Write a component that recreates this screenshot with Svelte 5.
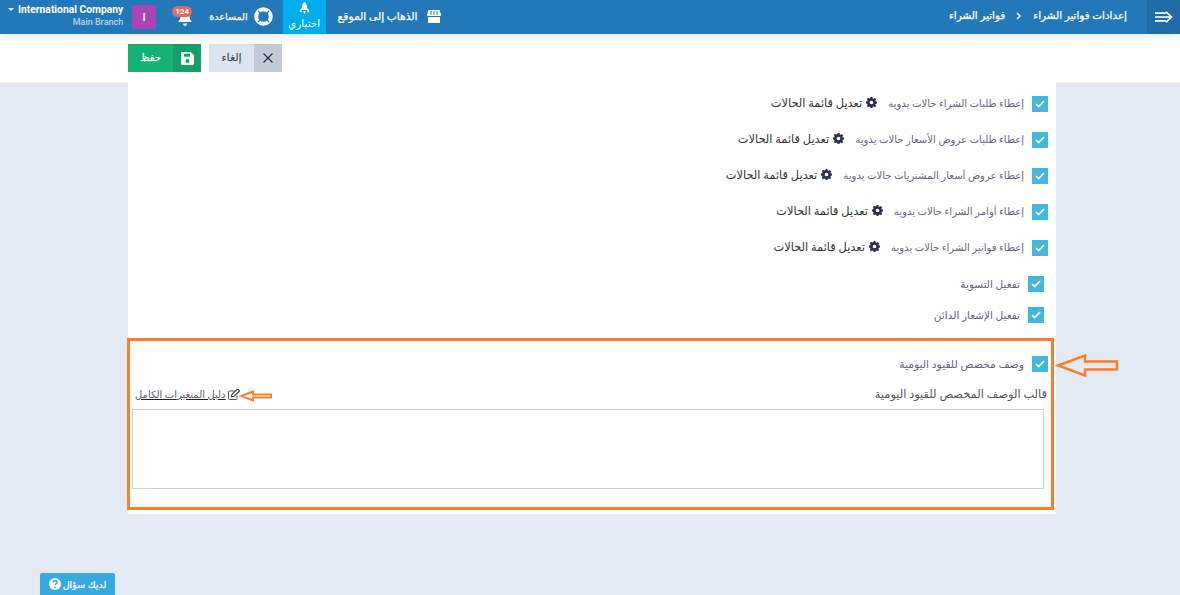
<script>
  const manual = [
    'إعطاء طلبات الشراء حالات يدوية',
    'إعطاء طلبات عروض الأسعار حالات يدوية',
    'إعطاء عروض أسعار المشتريات حالات يدوية',
    'إعطاء أوامر الشراء حالات يدوية',
    'إعطاء فواتير الشراء حالات يدوية'
  ];
</script>

{#snippet check()}
  <span class="check">
    <svg width="10" height="8" viewBox="0 0 10 8"><path d="M1 4l2.6 2.6L9 1.2" fill="none" stroke="#fff" stroke-width="1.7"/></svg>
  </span>
{/snippet}

<div class="page" dir="rtl">
  <header class="topbar">
    <button class="toggle" aria-label="menu">
      <svg width="18" height="12" viewBox="0 0 18 12"><path d="M0 2.2h11M0 6h15M0 9.8h11M11 .8L16.5 6 11 11.200" fill="none" stroke="#fff" stroke-width="1.7"/></svg>
    </button>
    <nav class="crumbs">
      <span>إعدادات فواتير الشراء</span>
      <svg width="6" height="8" viewBox="0 0 6 8"><path d="M1 1l3 3-3 3" fill="none" stroke="#fff" stroke-width="1.500"/></svg>
      <span>فواتير الشراء</span>
    </nav>
    <div class="spacer"></div>
    <a class="tool site">
      <svg width="14" height="13" viewBox="0 0 14 13"><path d="M1.500 0h11L14 4.500c0 1-.7 1.500-1.400 1.500H1.400C.7 6 0 5.500 0 4.500zM1 7h12v6H1z" fill="#fff"/><path d="M4 1v4M7 1v4M10 1v4" stroke="#2378b9"/></svg>
      <span>الذهاب إلى الموقع</span>
    </a>
    <a class="trial">
      <svg width="11" height="13" viewBox="0 0 12 14"><path d="M6 0c2 1.500 2.800 3.500 2.800 6v2.500H3.200V6C3.200 3.500 4 1.500 6 0zM3 6L.8 9.500V11h2.200zM9 6l2.200 3.500V11H9zM4.500 10h3L6 13z" fill="#fff"/></svg>
      <span>اختباري</span>
    </a>
    <a class="tool help">
      <svg width="19" height="19" viewBox="0 0 19 19"><circle cx="9.500" cy="9.500" r="7.300" fill="none" stroke="#fff" stroke-width="4"/><path d="M4 4l3 3M15 4l-3 3M4 15l3-3M15 15l-3-3" stroke="#2378b9" stroke-width="1.300"/></svg>
      <span>المساعدة</span>
    </a>
    <div class="bell">
      <svg width="16" height="17" viewBox="0 0 16 17"><path d="M8 1c3 0 4.500 2.200 4.500 5 0 3 1 4.500 2.500 6H1c1.500-1.500 2.500-3 2.500-6C3.500 3.200 5 1 8 1zM6 13.500h4C10 15 9 16 8 16s-2-1-2-2.500z" fill="#fff"/></svg>
      <b>124</b>
    </div>
    <div class="avatar">I</div>
    <div class="company">
      <div class="name"><span>International Company</span><i></i></div>
      <div class="branch">Main Branch</div>
    </div>
  </header>

  <div class="actions">
    <button class="btn save">
      <span class="ico">
        <svg width="13" height="13" viewBox="0 0 13 13"><path d="M0 1.500C0 .7.700 0 1.500 0h8.300L13 3.200v8.300c0 .8-.7 1.500-1.500 1.500h-10C.7 13 0 12.300 0 11.500zM3 1.800v3h6v-3zM6.500 7a2 2 0 100 4 2 2 0 000-4z" fill="#fff" fill-rule="evenodd"/></svg>
      </span>
      <span class="lbl">حفظ</span>
    </button>
    <button class="btn cancel">
      <span class="ico">
        <svg width="10" height="10" viewBox="0 0 10 10"><path d="M.5.500l9 9M9.500.500l-9 9" stroke="#2b3440" stroke-width="1.300"/></svg>
      </span>
      <span class="lbl">إلغاء</span>
    </button>
  </div>

  <main class="card">
    {#each manual as text}
      <div class="row manual">
        {@render check()}
        <label>{text}</label>
        <a class="edit">
          <svg width="11" height="11" viewBox="0 0 12 12"><path d="M5 0h2l.3 1.500 1.100.5 1.300-.8 1.400 1.400-.8 1.300.5 1.100L12 5v2l-1.200.3-.5 1.100.8 1.300-1.400 1.400-1.300-.8-1.100.5L7 12H5l-.3-1.200-1.100-.5-1.300.8-1.400-1.400.8-1.300-.5-1.100L0 7V5l1.200-.3.500-1.100-.8-1.300L2.300 .9l1.300.8 1.100-.5zM6 4a2 2 0 100 4 2 2 0 000-4z" fill="#2b3050" fill-rule="evenodd"/></svg>
          <span>تعديل قائمة الحالات</span>
        </a>
      </div>
    {/each}

    <div class="row plain">
      {@render check()}
      <label>تفعيل التسوية</label>
    </div>
    <div class="row plain">
      {@render check()}
      <label>تفعيل الإشعار الدائن</label>
    </div>

    <section class="marked">
      <div class="row inner">
        {@render check()}
        <label>وصف مخصص للقيود اليومية</label>
      </div>
      <div class="tpl-head">
        <span>قالب الوصف المخصص للقيود اليومية</span>
        <a class="guide">
          <svg width="12" height="11" viewBox="0 0 12 11"><path d="M7 2H1.500a1 1 0 00-1 1v6.500a1 1 0 001 1H8a1 1 0 001-1V6.500" fill="none" stroke="#444" stroke-width=".9"/><path d="M3.500 7.700l.4-2.200L9 .4a.8.8 0 011.100 0l1 1a.8.8 0 010 1.100L6 7.300z" fill="none" stroke="#333" stroke-width="1.100"/></svg>
          <span>دليل المتغيرات الكامل</span>
        </a>
      </div>
      <textarea></textarea>
      <svg class="arrow big" width="63" height="24" viewBox="0 0 63 24"><path d="M2 11.500L29 1.500v6h32v8H29v6z" fill="none" stroke="#fd7e28" stroke-width="2.500"/></svg>
      <svg class="arrow small" width="32" height="12" viewBox="0 0 32 12"><path d="M1.500 6L13 1.500V4.500h18v3H13v3z" fill="#fff" stroke="#fd7e28" stroke-width="2"/></svg>
    </section>
  </main>

  <button class="ask">
    <span>لديك سؤال</span>
    <svg width="12" height="12" viewBox="0 0 12 12"><circle cx="6" cy="6" r="6" fill="#fff"/><path d="M4 4.500C4 3.300 5 2.700 6 2.700s2 .7 2 1.700c0 1.300-2 1.400-2 2.800" fill="none" stroke="#36a9e1" stroke-width="1.400"/><circle cx="6" cy="9.300" r=".9" fill="#36a9e1"/></svg>
  </button>
</div>

<style>
  :global(body) {
    margin: 0;
    background: #e4eaf3;
  }

  .page {
    position: relative;
    height: 595px;
    overflow: hidden;
    font-family: Roboto, "DejaVu Sans", sans-serif;
    font-size: 10px;
    color: #6a5f8a;
  }

  a {
    color: inherit;
  }

  button {
    border: 0;
    padding: 0;
    font: inherit;
  }

  .topbar {
    position: relative;
    display: flex;
    align-items: center;
    height: 34px;
    background: #2378b9;
    color: #fff;
    box-shadow: 0 2px 10px #0000001a;
  }

  .toggle {
    display: flex;
    align-items: center;
    justify-content: center;
    width: 33px;
    height: 34px;
    background: #1f6ca7;
  }

  .crumbs {
    display: flex;
    align-items: center;
    gap: 11px;
    margin-right: 20px;
    padding-bottom: 3px;
    font-size: 10.400px;
    -webkit-text-stroke: 0.25px #fff;
  }

  .spacer {
    flex: 1;
  }

  .tool {
    display: flex;
    align-items: center;
    padding-bottom: 2px;
    -webkit-text-stroke: 0.25px #fff;
  }

  .site {
    gap: 9px;
    margin-left: 12px;
    font-size: 10.700px;
  }

  .trial {
    display: flex;
    flex-direction: column;
    align-items: center;
    justify-content: center;
    gap: 2px;
    width: 43px;
    height: 34px;
    padding-bottom: 2px;
    box-sizing: border-box;
    background: #00adef;
    font-size: 10.500px;
  }

  .help {
    gap: 6px;
    margin-right: 10px;
    font-size: 9.600px;
  }

  .bell {
    position: relative;
    display: flex;
    margin-right: 16px;
    margin-top: 3px;
  }

  .bell b {
    position: absolute;
    top: -4px;
    left: -5px;
    padding: 1px 3px;
    border-radius: 6px;
    background: #df6a6a;
    font-size: 8px;
    line-height: 9px;
  }

  .avatar {
    display: flex;
    align-items: center;
    justify-content: center;
    width: 24px;
    height: 24px;
    margin-right: 21px;
    border-radius: 2px;
    background: #aa44b8;
    font-weight: 700;
  }

  .company {
    margin: 0 9px 0 8px;
    padding-bottom: 3px;
    text-align: right;
    font-weight: 700;
    direction: ltr;
  }

  .name {
    display: flex;
    align-items: center;
    flex-direction: row-reverse;
    gap: 4px;
    line-height: 13px;
    font-size: 10.300px;
  }

  .name i {
    border: 3px solid transparent;
    border-top: 3px solid #fff;
    border-bottom: 0;
  }

  .branch {
    margin-top: 1px;
    color: #b7d3e8;
    font-size: 9px;
    font-weight: 500;
    line-height: 11px;
  }

  .actions {
    display: flex;
    align-items: center;
    gap: 8px;
    height: 48px;
    padding-right: 898px;
    background: #fff;
    box-shadow: 0 1px 0 #eceef0;
    flex-direction: row-reverse;
    justify-content: flex-end;
  }

  .btn {
    display: flex;
    height: 28px;
    width: 73px;
  }

  .ico {
    display: flex;
    align-items: center;
    justify-content: center;
    height: 100%;
    width: 28px;
  }

  .lbl {
    display: flex;
    flex: 1;
    align-items: center;
    justify-content: center;
    padding-bottom: 2px;
  }

  .save {
    background: #16b174;
    color: #fff;
    -webkit-text-stroke: 0.25px #fff;
  }

  .save .ico {
    background: #12a068;
  }

  .cancel {
    background: #dbe5f1;
    color: #2b3440;
    font-size: 11px;
  }

  .cancel .ico {
    background: #c3ccd6;
  }

  .card {
    width: 928px;
    height: 432px;
    margin-right: 124px;
    padding-top: 14px;
    box-sizing: border-box;
    background: #fff;
  }

  .row {
    display: flex;
    align-items: center;
    height: 16px;
    margin: 0 8px 20px 0;
  }

  .check {
    display: flex;
    align-items: center;
    justify-content: center;
    width: 16px;
    height: 16px;
    background: #43b8dc;
  }

  .row label {
    margin-right: 8px;
  }

  .manual label {
    padding-bottom: 2px;
    font-size: 10.100px;
  }

  .edit {
    display: flex;
    align-items: center;
    gap: 4px;
    margin-right: 11px;
    padding-bottom: 3px;
    color: #333;
    font-size: 11.400px;
  }

  .plain {
    margin-right: 12px;
    margin-bottom: 15px;
  }

  .plain label {
    margin-right: 8px;
    font-size: 10.500px;
  }

  .marked {
    position: relative;
    height: 172px;
    width: 927px;
    margin-top: 15px;
    margin-right: 2px;
    padding: 15px 3px 0 2px;
    box-sizing: border-box;
    border: 3px solid #fd7e28;
  }

  .inner {
    margin: 0 0 14px;
  }

  .row.inner label {
    font-size: 10.800px;
  }

  .tpl-head {
    display: flex;
    justify-content: space-between;
    align-items: center;
    height: 16px;
    padding: 0 1px 0 3px;
    color: #555;
    font-size: 11.400px;
  }

  .guide {
    display: flex;
    align-items: center;
    gap: 2px;
    color: #5a5a7a;
    font-size: 10px;
    text-decoration: underline #222;
  }

  textarea {
    display: block;
    width: calc(100% - 4px);
    height: 80px;
    box-sizing: border-box;
    margin: 7px 4px 0 0;
    border: 1px solid #ccd0d4;
    background: #fff;
    resize: none;
  }

  .arrow {
    position: absolute;
    overflow: visible;
  }

  .big {
    top: 13px;
    left: 926px;
  }

  .small {
    top: 49px;
    left: 110px;
  }

  .ask {
    position: absolute;
    left: 40px;
    top: 573px;
    display: flex;
    align-items: center;
    justify-content: center;
    gap: 2px;
    width: 75px;
    height: 22px;
    border-radius: 2px 2px 0 0;
    background: #36a9e1;
    color: #fff;
    font-size: 9.600px;
    -webkit-text-stroke: 0.25px #fff;
  }
</style>
